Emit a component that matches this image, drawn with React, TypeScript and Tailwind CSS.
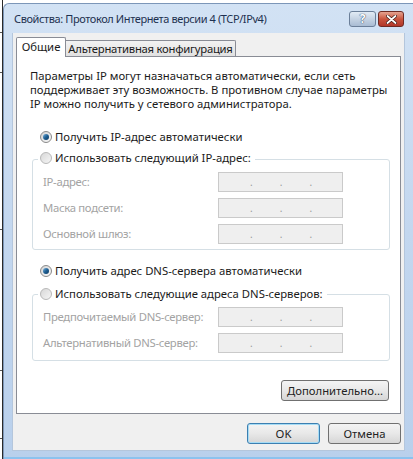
import React from 'react';

const FONT = { fontFamily: '"Noto Sans", "DejaVu Sans", sans-serif' };

function Radio({ checked, disabled }: { checked?: boolean; disabled?: boolean }) {
  return (
    <span
      className={
        'w-[12px] h-[12px] rounded-full border flex items-center justify-center shrink-0 ' +
        (disabled
          ? 'border-[#b8b8b8] bg-gradient-to-br from-[#d8d8d8] to-[#f6f6f6]'
          : 'border-[#8a8a8a] bg-gradient-to-br from-[#d4d4d4] to-[#fafafa]')
      }
    >
      {checked && (
        <span className="w-[6px] h-[6px] rounded-full bg-gradient-to-br from-[#7ab6e0] via-[#1f5f92] to-[#0d3a63]" />
      )}
    </span>
  );
}

function IpBox() {
  return (
    <div className="w-[125px] h-[20px] border border-[#cacaca] bg-[#efefef] flex items-center pl-[31px] gap-[27px] text-[#9a9a9a] text-[10px] leading-none">
      <span>.</span>
      <span>.</span>
      <span>.</span>
    </div>
  );
}

function Field({ label }: { label: string }) {
  return (
    <div className="flex items-center h-[20px]">
      <span className="w-[175px] whitespace-nowrap tracking-[-0.3px] text-[#a3a3a3]">{label}</span>
      <IpBox />
    </div>
  );
}

function WinButton({ children, className = '' }: { children: React.ReactNode; className?: string }) {
  return (
    <div
      className={
        'h-[21px] rounded-[3px] border border-[#707070] bg-gradient-to-b from-[#f4f4f4] via-[#e8e8e8] to-[#d6d6d6] flex items-center justify-center whitespace-nowrap text-[#222] ' +
        className
      }
    >
      {children}
    </div>
  );
}

export default function App() {
  return (
    <div className="w-[413px] h-[459px] bg-white flex overflow-hidden text-[11.3px] leading-[14px] text-[#1a1a1a]" style={FONT}>
      {/* background window edge */}
      <div className="w-[3px] h-full shrink-0 flex">
        <div className="w-[2px] h-full flex flex-col">
          <div className="h-[32px]" />
          <div className="h-[1px] bg-[#555]" />
          <div className="h-[39px]" />
          <div className="h-[1px] bg-[#555]" />
          <div className="h-[156px]" />
          <div className="h-[1px] bg-[#555]" />
          <div className="h-[140px]" />
          <div className="h-[1px] bg-[#555]" />
          <div className="h-[67px]" />
          <div className="h-[1px] bg-[#555]" />
        </div>
        <div className="w-[1px] h-full bg-[#2a2a2a]" />
      </div>

      {/* dialog */}
      <div className="flex-1 mt-[3px] h-[456px] flex flex-col border-l border-t border-[#7c96b8] rounded-tl-[6px] bg-gradient-to-b from-[#d2e2f4] via-[#c3d7ef] to-[#b9d0ec]">
        {/* title bar */}
        <div className="h-[29px] flex items-center pl-[10px] pr-[9px] shrink-0">
          <span className="text-[11px] tracking-[-0.4px] whitespace-nowrap text-[#1e3150]">
            Свойства: Протокол Интернета версии 4 (TCP/IPv4)
          </span>
          <div className="ml-auto flex gap-[2px] mt-[1px]">
            <div className="w-[27px] h-[16px] rounded-[3px] border border-[#6b7f99] bg-gradient-to-b from-[#e2ebf5] via-[#c5d3e3] to-[#a9bcd3] flex items-center justify-center">
              <span className="text-[12px] font-bold leading-none text-white" style={{ textShadow: '0 0 1px #2a3f5c, 0 0 1px #2a3f5c' }}>?</span>
            </div>
            <div className="w-[26px] h-[16px] rounded-[3px] border border-[#6e2a23] bg-gradient-to-b from-[#e4a391] via-[#c9543e] to-[#b1372a] flex items-center justify-center">
              <svg width="11" height="9" viewBox="0 0 11 9">
                <path d="M1.5 1 L9.5 8 M9.5 1 L1.5 8" stroke="#3a1510" strokeWidth="3.2" strokeLinecap="round" />
                <path d="M1.5 1 L9.5 8 M9.5 1 L1.5 8" stroke="#fff" strokeWidth="1.8" strokeLinecap="round" />
              </svg>
            </div>
          </div>
        </div>

        {/* client area */}
        <div className="ml-[8px] mr-[8px] h-[418px] bg-[#f0f0f0] border border-[#b4c6dc] border-t-0 pt-[4px] px-[3px] flex flex-col">
          {/* tabs */}
          <div className="h-[19px] flex items-end whitespace-nowrap">
            <div className="w-[50px] h-[20px] -mb-[1px] relative z-10 bg-white border border-b-0 border-[#898c95] rounded-t-[2px] flex items-center justify-center pb-[1px]">
              Общие
            </div>
            <div className="w-[170px] h-[16px] bg-gradient-to-b from-[#f2f2f2] to-[#e1e1e1] border border-l-0 border-b-0 border-[#898c95] rounded-tr-[2px] flex items-center justify-center tracking-[-0.25px]">
              Альтернативная конфигурация
            </div>
          </div>

          {/* panel */}
          <div className="h-[358px] bg-white border border-[#898c95] flex flex-col">
            <p className="pt-[12px] pl-[13px] whitespace-nowrap text-[#1a1a1a]">
              Параметры IP могут назначаться автоматически, если сеть
              <br />
              поддерживает эту возможность. В противном случае параметры
              <br />
              IP можно получить у сетевого администратора.
            </p>

            <div className="mt-[18px] ml-[23px] h-[16px] flex items-center gap-[3px] whitespace-nowrap">
              <Radio checked />
              <span>Получить IP-адрес автоматически</span>
            </div>

            <div className="mt-[14px] ml-[15px] mr-[10px] border border-[#d5dfe5] rounded-[3px] pb-[5px] pl-[10px] flex flex-col">
              <div className="-mt-[10px] -ml-[5px] h-[16px] w-fit bg-white pl-[2px] pr-[4px] flex items-center gap-[3px] whitespace-nowrap">
                <Radio disabled />
                <span>Использовать следующий IP-адрес:</span>
              </div>
              <div className="mt-[6px] flex flex-col gap-[6px]">
                <Field label="IP-адрес:" />
                <Field label="Маска подсети:" />
                <Field label="Основной шлюз:" />
              </div>
            </div>

            <div className="mt-[13px] ml-[23px] h-[16px] flex items-center gap-[3px] whitespace-nowrap">
              <Radio checked />
              <span>Получить адрес DNS-сервера автоматически</span>
            </div>

            <div className="mt-[15px] ml-[15px] mr-[10px] border border-[#d5dfe5] rounded-[3px] pb-[7px] pl-[10px] flex flex-col">
              <div className="-mt-[9px] -ml-[5px] h-[16px] w-fit bg-white pl-[2px] pr-[4px] flex items-center gap-[3px] whitespace-nowrap">
                <Radio disabled />
                <span>Использовать следующие адреса DNS-серверов:</span>
              </div>
              <div className="mt-[5px] flex flex-col gap-[6px]">
                <Field label="Предпочитаемый DNS-сервер:" />
                <Field label="Альтернативный DNS-сервер:" />
              </div>
            </div>

            <WinButton className="self-end mt-[19px] mr-[11px] w-[108px]">Дополнительно...</WinButton>
          </div>

          {/* bottom buttons */}
          <div className="mt-[9px] flex justify-end gap-[8px]">
            <WinButton className="w-[73px] !border-[#3c7fb1] shadow-[inset_0_0_0_1px_#a6dcf5]">OK</WinButton>
            <WinButton className="w-[73px]">Отмена</WinButton>
          </div>
        </div>

        {/* bottom frame edge */}
        <div className="flex-1 flex flex-col justify-end">
          <div className="h-[2px] bg-[#8cc2ee]" />
        </div>
      </div>
    </div>
  );
}
